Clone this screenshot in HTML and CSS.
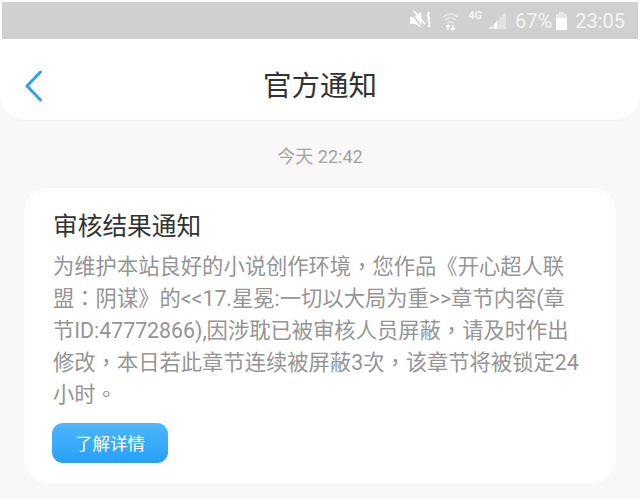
FILE: index.html
```html
<!DOCTYPE html>
<html lang="zh">
<head>
<meta charset="utf-8">
<title>官方通知</title>
<link rel="stylesheet" href="styles.css">
</head>
<body>
<div class="screen">
  <header class="top">
    <div class="status">
      <svg class="ic-mute" width="22" height="20" viewBox="0 0 22 20"><path d="M0 6h4l7-5 1 16-7-4H0z" fill="#fff"/><path d="M0 1l13 16" stroke="#d0d0d0" stroke-width="1.500"/><path d="M4 0l11 13" stroke="#fff" stroke-width="1.800"/><path d="M18 1c2.500 2-1.500 3 .5 5s-1.500 3 .5 5-1.500 3 .5 5" stroke="#fff" stroke-width="2" fill="none"/></svg>
      <svg class="ic-wifi" width="15" height="20" viewBox="0 0 15 20"><path d="M.5 6c4-4 10-4 14 0M2.500 9c3-3 7-3 10 0M4.500 12c2-1.500 4-1.500 6 0" stroke="#e8e8e8" stroke-width="1.400" fill="none"/><path d="M5 19v-5M3 16l2-2 2 2M10 14v5M8 17l2 2 2-2" stroke="#fff" stroke-width="1.400" fill="none"/></svg>
      <span class="net">4G</span>
      <svg class="ic-signal" width="19" height="19" viewBox="0 0 19 19"><path d="M18 1v17H1z" fill="#e2e2e2"/><path d="M1 18h3v-3zM6 18h3V10L6 13z" fill="#fff"/></svg>
      <span class="pct">67%</span>
      <svg class="ic-batt" width="11" height="18" viewBox="0 0 11 18"><path d="M3 0h5v2h3v16H0V2h3z" fill="#e6e6e6"/><path d="M0 6h11v12H0z" fill="#fff"/></svg>
      <span class="clock">23:05</span>
    </div>
    <nav class="nav">
      <svg class="back" width="20" height="32" viewBox="0 0 20 32"><path d="M16.500 2 3 16l13.500 14" stroke="#36a0e6" stroke-width="3" stroke-linecap="round" stroke-linejoin="round" fill="none"/></svg>
      <h1 class="nav-title">官方通知</h1>
    </nav>
  </header>
  <main class="feed">
    <p class="time">今天 22:42</p>
    <article class="card">
      <h2 class="card-title">审核结果通知</h2>
      <p class="card-body" lang="zh-TW">为维护本站良好的小说创作环境，您作品《开心超人联盟：阴谋》的&lt;&lt;17.星冕:一切以大局为重&gt;&gt;章节内容(章节ID:47772866),因涉耽已被审核人员屏蔽，请及时作出修改，本日若此章节连续被屏蔽3次，该章节将被锁定24小时。</p>
      <button class="more">了解详情</button>
    </article>
  </main>
</div>
</body>
</html>
```
FILE: styles.css
```css
* { box-sizing: border-box; }
html, body { margin: 0; padding: 0; }
body {
  width: 640px;
  height: 499px;
  overflow: hidden;
  background: #f9f7f8;
  font-family: Roboto, "Noto Sans CJK TC", sans-serif;
}
.top {
  background: #fff;
  padding: 2px 2px 0;
  border-radius: 0 0 24px 24px;
  height: 120px;
  box-shadow: 0 1px 1px #f3f1f2;
}
.status {
  height: 37px;
  background: #d0d0d0;
  display: flex;
  align-items: center;
  justify-content: flex-end;
  padding-right: 13px;
  color: #f4f4f4;
  font-family: Roboto, sans-serif;
}
.ic-mute { margin-right: 11px; }
.ic-wifi { margin-right: 10px; }
.net { font-size: 11px; font-weight: 700; margin: -10px 6px 0 0; }
.ic-signal { margin-right: 8px; }
.pct { font-size: 20px; margin-right: 4px; }
.ic-batt { margin-right: 8px; }
.clock { font-size: 20px; }
.nav {
  position: relative;
  height: 81px;
  display: flex;
  align-items: center;
  justify-content: center;
}
.back { position: absolute; left: 22px; top: 31px; }
.nav-title {
  margin: 0;
  font-size: 28.500px;
  font-weight: 400;
  color: #333;
  line-height: 40px;
  position: relative;
  top: 7px;
}
.feed { padding: 0 24px; }
.time {
  margin: 25px 0 0;
  text-align: center;
  font-size: 18px;
  line-height: 24px;
  color: #a3a3a3;
}
.card {
  margin-top: 19px;
  height: 295px;
  background: #fff;
  border-radius: 24px;
  padding: 22px 28px 0 29px;
}
.card-title {
  margin: 0;
  font-size: 24.700px;
  font-weight: 400;
  line-height: 34px;
  color: #333;
}
.card-body {
  margin: 7px 0 0;
  font-size: 21.300px;
  line-height: 32px;
  color: #959595;
  width: 530px;
  word-break: break-all;
}
.more {
  display: block;
  margin-top: 12px;
  margin-left: -1px;
  width: 116px;
  height: 40px;
  border: 0;
  border-radius: 11px;
  background: linear-gradient(#4fb6fb, #25a0f8);
  color: #fff;
  font: 400 17.500px/40px "Noto Sans CJK TC", sans-serif;
  padding: 0;
}
```
